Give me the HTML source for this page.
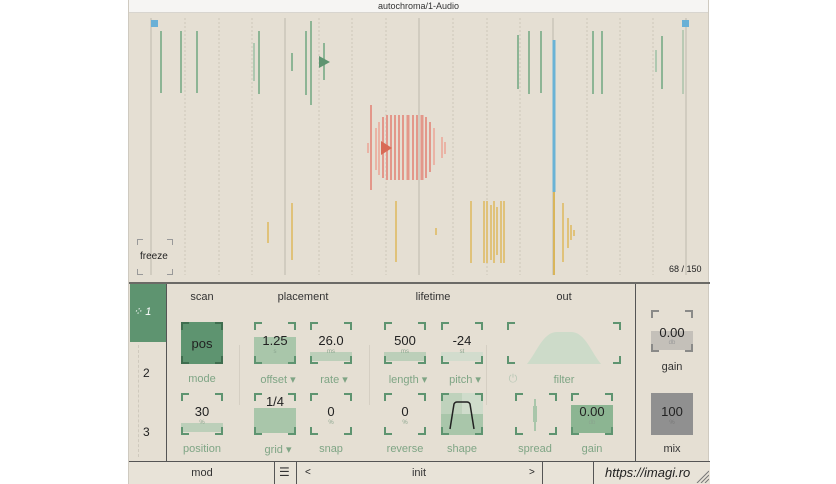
<!DOCTYPE html>
<html><head><meta charset="utf-8"><style>
*{margin:0;padding:0;box-sizing:border-box}
body{width:836px;height:484px;background:#fff;position:relative;overflow:hidden;font-family:"Liberation Sans",sans-serif}
.win{position:absolute;left:128px;top:0;width:581px;height:484px;background:#e5dfd3;border-left:1px solid #cfcac0;border-right:1px solid #cfcac0}
.title{position:absolute;left:0;top:0;width:100%;height:13px;background:#f6f5f3;border-bottom:1px solid #d8d5cf;font-size:9px;text-align:center;line-height:12px;color:#333}
.a{position:absolute}
.t{position:absolute;font-size:11px;color:#333;text-align:center;transform:translateX(-50%);white-space:nowrap}
.l{position:absolute;font-size:11px;color:#7fa585;text-align:center;transform:translateX(-50%);white-space:nowrap}
.k{position:absolute;width:42px;height:42px}
.k i{position:absolute;width:8px;height:8px;border-color:#5e9470;border-style:solid;border-width:0}
.k .c1{left:0;top:0;border-left-width:2px;border-top-width:2px}
.k .c2{right:0;top:0;border-right-width:2px;border-top-width:2px}
.k .c3{left:0;bottom:0;border-left-width:2px;border-bottom-width:2px}
.k .c4{right:0;bottom:0;border-right-width:2px;border-bottom-width:2px}
.k.g i{border-color:#8a8a88}
.f{position:absolute;left:0;right:0;bottom:0}
.v{position:absolute;left:0;right:0;top:11px;text-align:center;font-size:13px;color:#222}
.u{position:absolute;left:0;right:0;top:27px;text-align:center;font-size:6px;color:#8aa58e}
</style></head><body>
<div class="win">
<div class="title">autochroma/1-Audio</div>
<svg class="a" style="left:0;top:14px" width="581" height="268" viewBox="128 14 581 268">
<g stroke="#cdc7ba" stroke-width="1" stroke-dasharray="2,2">
<line x1="184" y1="18" x2="184" y2="275"/><line x1="218" y1="18" x2="218" y2="275"/><line x1="251" y1="18" x2="251" y2="275"/>
<line x1="318" y1="18" x2="318" y2="275"/><line x1="351" y1="18" x2="351" y2="275"/><line x1="385" y1="18" x2="385" y2="275"/>
<line x1="452" y1="18" x2="452" y2="275"/><line x1="486" y1="18" x2="486" y2="275"/><line x1="519" y1="18" x2="519" y2="275"/>
<line x1="586" y1="18" x2="586" y2="275"/><line x1="619" y1="18" x2="619" y2="275"/><line x1="652" y1="18" x2="652" y2="275"/>
</g>
<g stroke="#bdb8ae" stroke-width="1">
<line x1="150" y1="18" x2="150" y2="275"/><line x1="284" y1="18" x2="284" y2="275"/><line x1="418" y1="18" x2="418" y2="275"/><line x1="552" y1="18" x2="552" y2="275"/><line x1="685" y1="18" x2="685" y2="275"/>
</g>
<g stroke="#8db595" stroke-width="2">
<line x1="160" y1="31" x2="160" y2="93"/><line x1="180" y1="31" x2="180" y2="93"/><line x1="196" y1="31" x2="196" y2="93"/>
<line x1="253" y1="43" x2="253" y2="81" stroke="#aec8b0"/><line x1="258" y1="31" x2="258" y2="94"/>
<line x1="291" y1="53" x2="291" y2="71"/><line x1="305" y1="31" x2="305" y2="95"/><line x1="310" y1="21" x2="310" y2="105"/><line x1="323" y1="43" x2="323" y2="80"/>
<line x1="517" y1="35" x2="517" y2="89"/><line x1="528" y1="31" x2="528" y2="94"/><line x1="540" y1="31" x2="540" y2="93"/>
<line x1="592" y1="31" x2="592" y2="94"/><line x1="601" y1="31" x2="601" y2="94"/>
<line x1="655" y1="50" x2="655" y2="72" stroke="#aec8b0"/><line x1="661" y1="36" x2="661" y2="89"/><line x1="682" y1="30" x2="682" y2="94" stroke-width="1"/>
</g>
<polygon points="318,56 318,68 329,62" fill="#5e9470"/>
<rect x="150" y="20" width="7" height="7" fill="#6ab0d6"/><rect x="681" y="20" width="7" height="7" fill="#6ab0d6"/>
<line x1="553" y1="40" x2="553" y2="192" stroke="#6ab3d6" stroke-width="3"/>
<line x1="553" y1="192" x2="553" y2="275" stroke="#d9b55a" stroke-width="2"/>
<g stroke="#e3978a" stroke-width="2">
<line x1="370" y1="105" x2="370" y2="190"/>
<line x1="367" y1="143" x2="367" y2="153" stroke="#eab3a5"/>
<line x1="375" y1="128" x2="375" y2="170" stroke="#eab3a5"/><line x1="378" y1="122" x2="378" y2="175" stroke="#eab3a5"/>
<line x1="382" y1="117" x2="382" y2="178"/><line x1="386" y1="115" x2="386" y2="180"/><line x1="390" y1="115" x2="390" y2="180"/>
<line x1="394" y1="115" x2="394" y2="180"/><line x1="398" y1="115" x2="398" y2="180"/><line x1="402" y1="115" x2="402" y2="180"/>
<line x1="407" y1="115" x2="407" y2="180" stroke-width="3"/><line x1="412" y1="115" x2="412" y2="180"/><line x1="416" y1="115" x2="416" y2="180"/>
<line x1="421" y1="115" x2="421" y2="180" stroke-width="3"/><line x1="425" y1="117" x2="425" y2="178"/><line x1="429" y1="122" x2="429" y2="172"/>
<line x1="433" y1="128" x2="433" y2="165" stroke="#eab3a5"/><line x1="441" y1="137" x2="441" y2="158" stroke="#eab3a5"/><line x1="444" y1="142" x2="444" y2="154" stroke="#eab3a5"/>
</g>
<polygon points="380,141 380,155 391,148" fill="#d86a55"/>
<g stroke="#e0c27a" stroke-width="2">
<line x1="267" y1="222" x2="267" y2="243"/><line x1="291" y1="203" x2="291" y2="260"/>
<line x1="395" y1="201" x2="395" y2="262"/><line x1="435" y1="228" x2="435" y2="235"/>
<line x1="470" y1="201" x2="470" y2="263"/><line x1="483" y1="201" x2="483" y2="263"/><line x1="486" y1="201" x2="486" y2="263"/><line x1="490" y1="205" x2="490" y2="260"/><line x1="493" y1="201" x2="493" y2="263"/><line x1="496" y1="207" x2="496" y2="255"/><line x1="500" y1="201" x2="500" y2="263"/><line x1="503" y1="201" x2="503" y2="263"/>
<line x1="562" y1="203" x2="562" y2="262"/><line x1="567" y1="218" x2="567" y2="248"/><line x1="570" y1="225" x2="570" y2="240"/><line x1="573" y1="230" x2="573" y2="236"/>
</g>
</svg>
<div class="k" style="left:8px;top:239px;width:36px;height:36px"><i class="c1" style="border-color:#999;border-width:1px 0 0 1px;width:6px;height:6px"></i><i class="c2" style="border-color:#999;border-width:1px 1px 0 0;width:6px;height:6px"></i><i class="c3" style="border-color:#999;border-width:0 0 1px 1px;width:6px;height:6px"></i><i class="c4" style="border-color:#999;border-width:0 1px 1px 0;width:6px;height:6px"></i></div>
<div class="a" style="left:11px;top:251px;font-size:10px;color:#222">freeze</div>
<div class="a" style="left:540px;top:264px;font-size:9px;color:#222">68 / 150</div>

<div class="a" style="left:0;top:282px;width:581px;height:2px;background:#6b6a66"></div>
<div class="a" style="left:1px;top:284px;width:36px;height:58px;background:#5e9470"></div>
<div class="a" style="left:4px;top:305px;font-size:11px;color:#fff;font-style:italic">⁘ 1</div>
<div class="a" style="left:14px;top:366px;font-size:12px;color:#222">2</div>
<div class="a" style="left:14px;top:425px;font-size:12px;color:#222">3</div>
<div class="a" style="left:9px;top:345px;width:1px;height:112px;border-left:1px dashed #cfc9bd"></div>
<div class="a" style="left:37px;top:284px;width:1px;height:178px;background:#555"></div>
<div class="a" style="left:506px;top:284px;width:1px;height:178px;background:#555"></div>
<div class="a" style="left:110px;top:345px;width:1px;height:60px;background:#d5cfc3"></div>
<div class="a" style="left:240px;top:345px;width:1px;height:60px;background:#d5cfc3"></div>
<div class="a" style="left:357px;top:345px;width:1px;height:60px;background:#d5cfc3"></div>

<div class="t" style="left:73px;top:291px">scan</div>
<div class="t" style="left:174px;top:291px">placement</div>
<div class="t" style="left:304px;top:291px">lifetime</div>
<div class="t" style="left:435px;top:291px">out</div>

<div class="k" style="left:52px;top:322px;background:#5e9470"><i class="c1" style="border-color:#3f6e4f"></i><i class="c2" style="border-color:#3f6e4f"></i><i class="c3" style="border-color:#3f6e4f"></i><i class="c4" style="border-color:#3f6e4f"></i><div class="v" style="top:14px">pos</div></div>
<div class="k" style="left:125px;top:322px"><div class="f" style="top:15px;background:#a9c6aa"></div><i class="c1"></i><i class="c2"></i><i class="c3"></i><i class="c4"></i><div class="v">1.25</div><div class="u">s</div></div>
<div class="k" style="left:181px;top:322px"><div class="f" style="top:30px;bottom:3px;background:#bccfb9"></div><i class="c1"></i><i class="c2"></i><i class="c3"></i><i class="c4"></i><div class="v">26.0</div><div class="u">ms</div></div>
<div class="k" style="left:255px;top:322px"><div class="f" style="top:30px;bottom:3px;background:#bccfb9"></div><i class="c1"></i><i class="c2"></i><i class="c3"></i><i class="c4"></i><div class="v">500</div><div class="u">ms</div></div>
<div class="k" style="left:312px;top:322px"><div class="f" style="top:30px;bottom:3px;background:#d2dccd"></div><i class="c1"></i><i class="c2"></i><i class="c3"></i><i class="c4"></i><div class="v">-24</div><div class="u">st</div></div>
<div class="k" style="left:378px;top:322px;width:114px"><i class="c1"></i><i class="c2"></i><i class="c3"></i><i class="c4"></i>
<svg class="a" style="left:20px;top:8px" width="74" height="34"><path d="M0 34 C10 22 16 2 30 2 L44 2 C58 2 64 22 74 34 Z" fill="#cddbc9"/></svg></div>
<div class="l" style="left:73px;top:373px">mode</div>
<div class="l" style="left:149px;top:373px">offset ▾</div>
<div class="l" style="left:205px;top:373px">rate ▾</div>
<div class="l" style="left:279px;top:373px">length ▾</div>
<div class="l" style="left:336px;top:373px">pitch ▾</div>
<div class="l" style="left:384px;top:373px;color:#b8c8b6">⏻</div>
<div class="l" style="left:435px;top:374px">filter</div>

<div class="k" style="left:52px;top:393px"><div class="f" style="top:30px;bottom:3px;background:#bccfb9"></div><i class="c1"></i><i class="c2"></i><i class="c3"></i><i class="c4"></i><div class="v">30</div><div class="u">%</div></div>
<div class="k" style="left:125px;top:393px"><div class="f" style="top:15px;bottom:2px;background:#a9c6aa"></div><i class="c1"></i><i class="c2"></i><i class="c3"></i><i class="c4"></i><div class="v" style="top:1px">1/4</div></div>
<div class="k" style="left:181px;top:393px"><i class="c1"></i><i class="c2"></i><i class="c3"></i><i class="c4"></i><div class="v">0</div><div class="u">%</div></div>
<div class="k" style="left:255px;top:393px"><i class="c1"></i><i class="c2"></i><i class="c3"></i><i class="c4"></i><div class="v">0</div><div class="u">%</div></div>
<div class="k" style="left:312px;top:393px"><div class="f" style="top:0;background:#bfd2bc"></div><div class="a" style="left:21px;top:0;right:0;height:21px;background:#cfdccb"></div><div class="a" style="left:0;top:21px;right:0;bottom:0;background:#a9c6aa"></div><i class="c1"></i><i class="c2"></i><i class="c3"></i><i class="c4"></i>
<svg class="a" style="left:0;top:0" width="42" height="42"><path d="M9 36 L13 11 Q14 9 16 9 L26 9 Q28 9 29 11 L33 36" fill="none" stroke="#222" stroke-width="1.5"/></svg></div>
<div class="k" style="left:386px;top:393px"><i class="c1"></i><i class="c2"></i><i class="c3"></i><i class="c4"></i><div class="a" style="left:19px;top:6px;width:2px;height:32px;background:#a9c6aa"></div><div class="a" style="left:18px;top:13px;width:4px;height:16px;background:#a9c6aa"></div></div>
<div class="k" style="left:442px;top:393px"><div class="f" style="top:12px;bottom:2px;background:#8cb592"></div><i class="c1"></i><i class="c2"></i><i class="c3"></i><i class="c4"></i><div class="v">0.00</div><div class="u">db</div></div>
<div class="l" style="left:73px;top:443px">position</div>
<div class="l" style="left:149px;top:443px">grid ▾</div>
<div class="l" style="left:202px;top:443px">snap</div>
<div class="l" style="left:276px;top:443px">reverse</div>
<div class="l" style="left:333px;top:443px">shape</div>
<div class="l" style="left:406px;top:443px">spread</div>
<div class="l" style="left:463px;top:443px">gain</div>

<div class="k g" style="left:522px;top:310px"><div class="f" style="top:21px;bottom:2px;background:#c4c0b9"></div><i class="c1"></i><i class="c2"></i><i class="c3"></i><i class="c4"></i><div class="v" style="top:15px">0.00</div><div class="u" style="top:30px;color:#999">db</div></div>
<div class="t" style="left:543px;top:361px">gain</div>
<div class="k g" style="left:522px;top:393px;background:#909090"><div class="v">100</div><div class="u" style="color:#777">%</div></div>
<div class="t" style="left:543px;top:443px">mix</div>

<div class="a" style="left:0;top:461px;width:581px;height:1px;background:#555"></div>
<div class="a" style="left:0;top:462px;width:581px;height:22px;background:#e8e3d8"></div>
<div class="t" style="left:73px;top:467px">mod</div>
<div class="a" style="left:145px;top:462px;width:1px;height:22px;background:#555"></div>
<div class="a" style="left:150px;top:465px;font-size:12px;color:#333">☰</div>
<div class="a" style="left:167px;top:462px;width:1px;height:22px;background:#555"></div>
<div class="a" style="left:176px;top:467px;font-size:10px;color:#222">&lt;</div>
<div class="t" style="left:290px;top:467px">init</div>
<div class="a" style="left:400px;top:467px;font-size:10px;color:#222">&gt;</div>
<div class="a" style="left:413px;top:462px;width:1px;height:22px;background:#555"></div>
<div class="a" style="left:464px;top:462px;width:1px;height:22px;background:#555"></div>
<div class="a" style="left:476px;top:465px;font-size:13px;font-style:italic;color:#222">https://imagi.ro</div>
<svg class="a" style="left:567px;top:470px" width="13" height="13"><path d="M1 13 L13 1 M5 13 L13 5 M9 13 L13 9" stroke="#777" stroke-width="1"/></svg>
</div>
</body></html>
